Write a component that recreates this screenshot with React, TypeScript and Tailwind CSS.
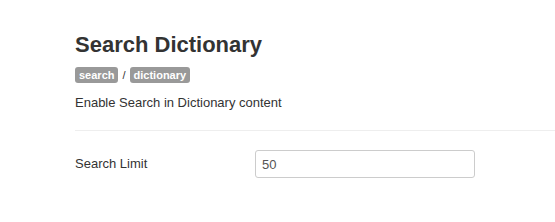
export default function App() {
  return (
    <div className="h-[222px] w-[555px] overflow-hidden bg-white font-['Liberation_Sans',Arial,sans-serif] text-[#333]">
      <div className="pl-[75px] pt-[33px]">
        {/* Header */}
        <h1 className="text-[22px] font-bold leading-[24px]">Search Dictionary</h1>
        <div className="mt-[10px] flex items-center gap-[4px] text-[11px] leading-[16px]">
          <span className="rounded-[3px] bg-[#999] px-[4px] font-bold text-white">search</span>
          <span className="text-[#333]">/</span>
          <span className="rounded-[3px] bg-[#999] px-[4px] font-bold text-white">dictionary</span>
        </div>
        <p className="mt-[11px] text-[13px] leading-[18px]">Enable Search in Dictionary content</p>
        <div className="mt-[18px] border-t border-[#eee]" />

        {/* Settings */}
        <div className="mt-[19px] flex items-center">
          <label className="w-[180px] text-[13px] leading-[18px]">Search Limit</label>
          <input
            defaultValue="50"
            className="h-[28px] w-[220px] rounded-[3px] border border-[#ccc] px-[6px] text-[13px] text-[#555] outline-none"
          />
        </div>
      </div>
    </div>
  );
}
